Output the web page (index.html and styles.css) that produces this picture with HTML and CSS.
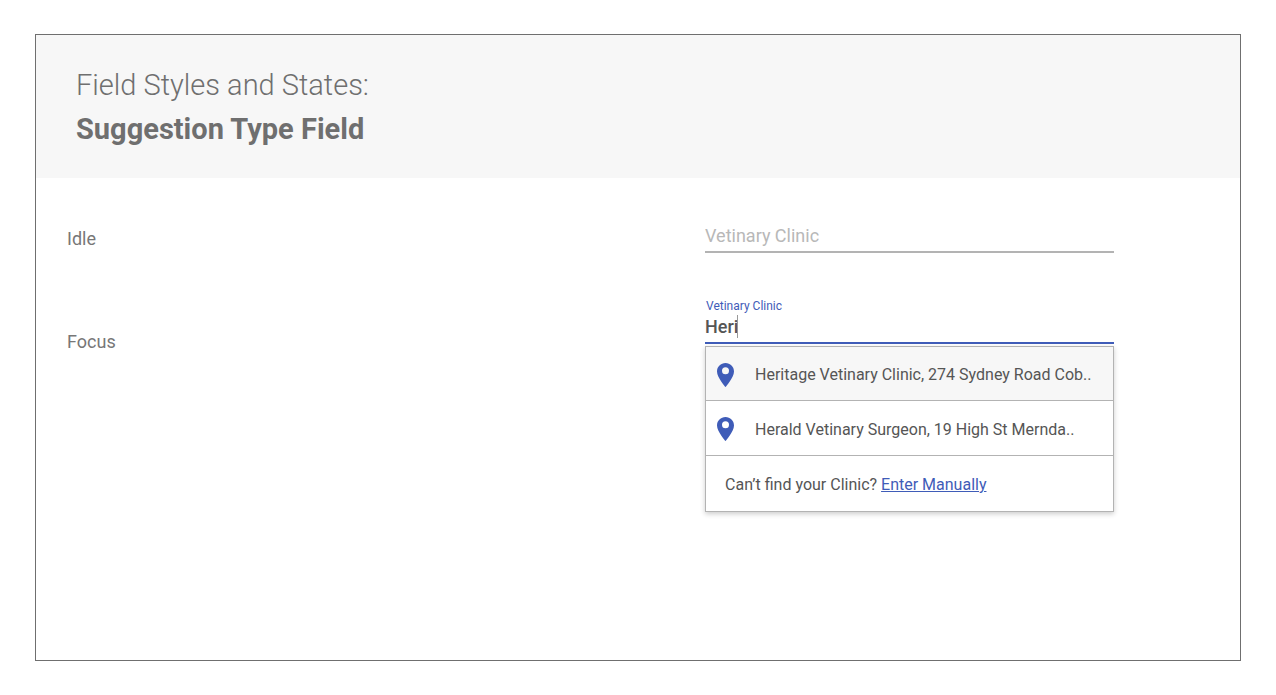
FILE: index.html
```html
<!DOCTYPE html>
<html lang="en">

<head>
    <meta charset="UTF-8">
    <meta name="viewport" content="width=device-width, initial-scale=1.0">
    <title>Suggestion Type Field</title>
    <link rel="stylesheet" href="styles.css">
</head>

<body>
    <main class="sheet">
        <header class="sheet-header">
            <h1>Field Styles and States: <strong>Suggestion Type Field</strong></h1>
        </header>

        <div class="states">
            <section class="state">
                <h2 class="state-name">Idle</h2>
                <div class="field">
                    <input type="text" id="clinic-idle" class="field-input" placeholder="Vetinary Clinic" aria-label="Vetinary Clinic">
                </div>
            </section>

            <section class="state state-focus">
                <h2 class="state-name">Focus</h2>
                <div class="field field-focus">
                    <label for="clinic-focus" class="field-label">Vetinary Clinic</label>
                    <div class="field-box">
                        <input type="text" id="clinic-focus" class="field-input" value="Heri" autocomplete="off">
                        <span class="caret"></span>
                    </div>
                    <div class="suggestions">
                        <button type="button" class="suggestion selected">
                            <svg class="pin" viewBox="0 0 17 24" aria-hidden="true">
                                <path fill-rule="evenodd" d="M8.500 0C3.800 0 0 3.700 0 8.400C0 14.500 8.500 24 8.500 24S17 14.500 17 8.400C17 3.700 13.200 0 8.500 0ZM8.500 4.200A3.500 3.500 0 1 1 8.500 11.200A3.500 3.500 0 1 1 8.500 4.200Z"/>
                            </svg>
                            <span>Heritage Vetinary Clinic, 274 Sydney Road Cob..</span>
                        </button>
                        <button type="button" class="suggestion">
                            <svg class="pin" viewBox="0 0 17 24" aria-hidden="true">
                                <path fill-rule="evenodd" d="M8.500 0C3.800 0 0 3.700 0 8.400C0 14.500 8.500 24 8.500 24S17 14.500 17 8.400C17 3.700 13.200 0 8.500 0ZM8.500 4.200A3.500 3.500 0 1 1 8.500 11.200A3.500 3.500 0 1 1 8.500 4.200Z"/>
                            </svg>
                            <span>Herald Vetinary Surgeon, 19 High St Mernda..</span>
                        </button>
                        <p class="not-found">Can’t find your Clinic? <a href="#">Enter Manually</a></p>
                    </div>
                </div>
            </section>
        </div>
    </main>
</body>

</html>
```
FILE: styles.css
```css
* {
    font-family: "Roboto", sans-serif;
    margin: 0;
    box-sizing: border-box;
}

body {
    min-height: 100vh;
    padding: 34px 35px;
    display: flex;
    background: #ffffff;
}

.sheet {
    flex: 1;
    border: 1px solid #6f6f6f;
}

.sheet-header {
    padding: 28px 40px 27px;
    background: #f7f7f7;
}

.sheet-header h1 {
    color: #6f6f6f;
    font-size: 29px;
    font-weight: 300;
    line-height: 44px;
}

.sheet-header strong {
    display: block;
    font-weight: 700;
}

.states {
    padding: 43px 126px 43px 31px;
    display: flex;
    flex-direction: column;
    gap: 47px;
}

.state {
    display: grid;
    grid-template-columns: 39fr 25fr;
}

.state-name {
    padding-top: 6px;
    color: #777777;
    font-size: 18px;
    font-weight: 400;
    line-height: 24px;
}

.state-focus .state-name {
    padding-top: 30px;
}

.field-label {
    display: block;
    padding-left: 1px;
    color: #3f5cb8;
    font-size: 12px;
    line-height: 12px;
}

.field-box {
    position: relative;
}

.field-input {
    display: block;
    width: 100%;
    height: 32px;
    padding: 0 0 2px;
    border: none;
    border-bottom: 2px solid #b3b3b3;
    outline: none;
    background: transparent;
    color: #555555;
    font-size: 18px;
}

.field-input::placeholder {
    color: #b8b8b8;
}

.field-focus .field-input {
    border-color: #3f5cb8;
    font-weight: 500;
    caret-color: transparent;
}

.caret {
    position: absolute;
    top: 3px;
    left: 32px;
    width: 1px;
    height: 23px;
    background: #999999;
}

.suggestions {
    margin-top: 2px;
    border: 1px solid #b3b3b3;
    background: #ffffff;
    box-shadow: 0 2px 5px rgba(0, 0, 0, 0.2);
}

.suggestion {
    width: 100%;
    height: 55px;
    padding: 2px 11px 0;
    display: flex;
    align-items: center;
    gap: 21px;
    border: none;
    border-bottom: 1px solid #b3b3b3;
    background: transparent;
    color: #555555;
    font-size: 16px;
    text-align: left;
    cursor: pointer;
}

.suggestion:first-child {
    height: 54px;
}

.suggestion:hover,
.suggestion.selected {
    background: #f7f7f7;
}

.pin {
    flex: none;
    width: 17px;
    height: 24px;
    fill: #3f5cb8;
}

.not-found {
    padding: 2px 19px 0;
    color: #555555;
    font-size: 16px;
    line-height: 53px;
}

.not-found a {
    color: #3f5cb8;
}

@media only screen and (max-width: 950px) {
    .states {
        padding-right: 31px;
    }

    .state {
        grid-template-columns: 1fr 2fr;
    }
}
```
